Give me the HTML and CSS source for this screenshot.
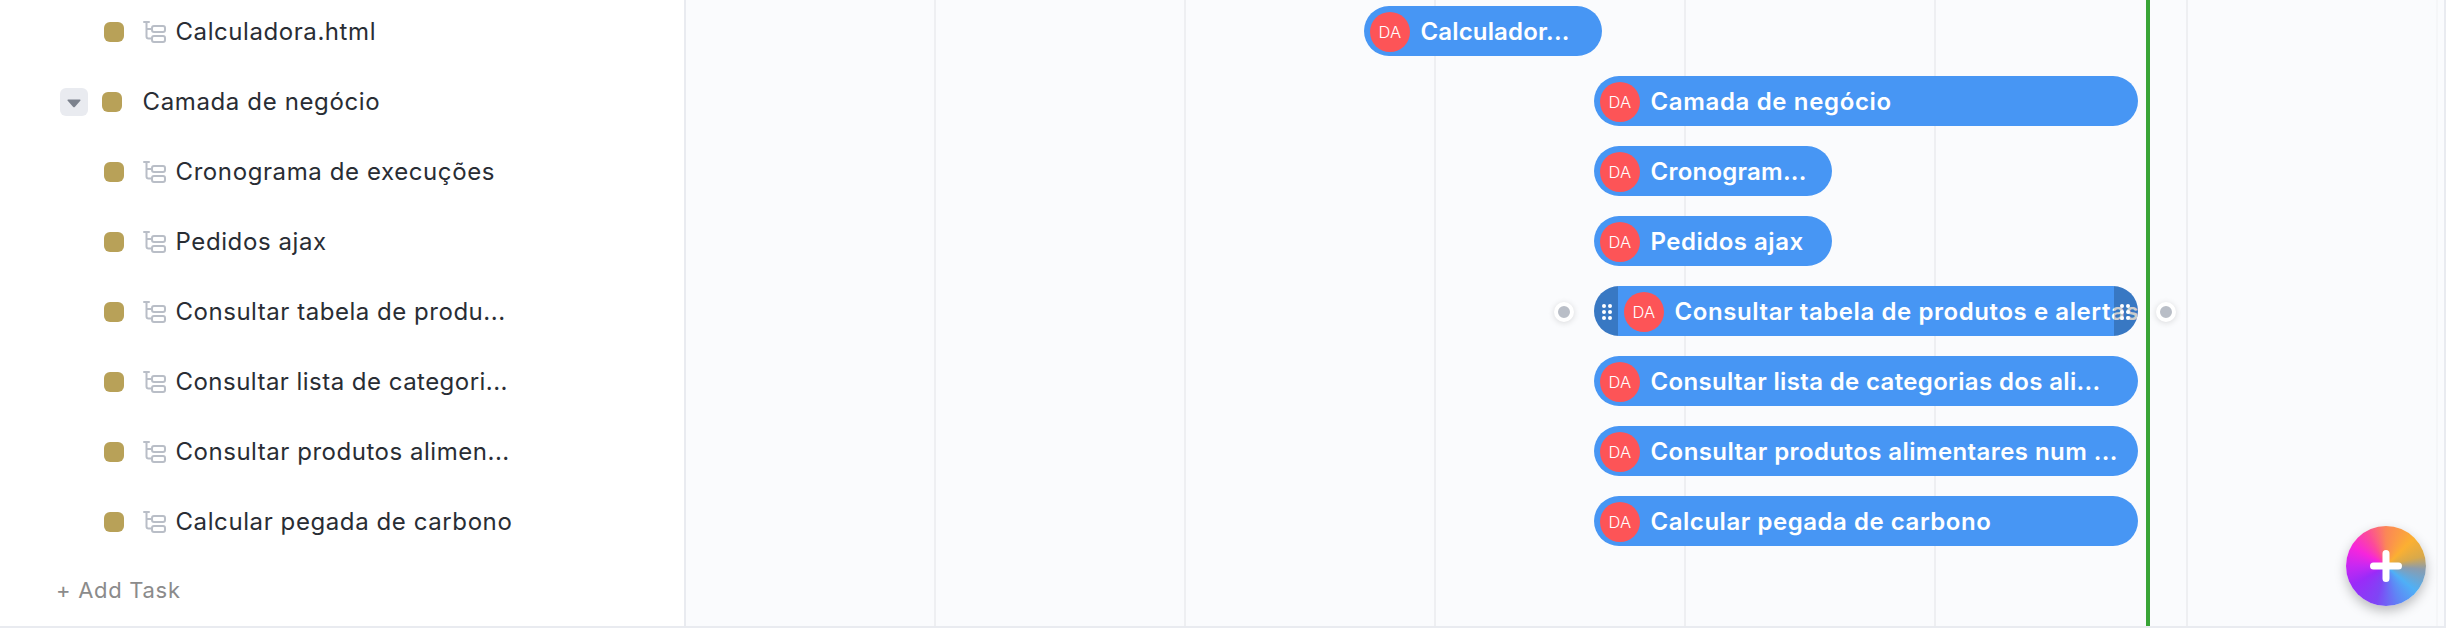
FILE: index.html
```html
<!DOCTYPE html>
<html lang="pt">
<head>
<meta charset="utf-8">
<title>Gantt</title>
<link rel="stylesheet" href="styles.css">
</head>
<body>
<svg class="defs" width="0" height="0" aria-hidden="true">
  <symbol id="subtask" viewBox="0 0 24 24">
    <path d="M1 2h5M3.5 2v14.5q0 2 2 2H9M3.5 9H9"/>
    <rect x="9" y="6" width="13" height="6" rx="2"/>
    <rect x="9" y="16" width="13" height="6" rx="2"/>
  </symbol>
  <symbol id="grip" viewBox="0 0 10 16">
    <circle cx="2" cy="2" r="2"/><circle cx="8" cy="2" r="2"/>
    <circle cx="2" cy="8" r="2"/><circle cx="8" cy="8" r="2"/>
    <circle cx="2" cy="14" r="2"/><circle cx="8" cy="14" r="2"/>
  </symbol>
</svg>
<div class="gantt">
  <aside class="tasks">
    <div class="row sub"><i class="status"></i><svg class="tree"><use href="#subtask"/></svg><span class="name n1">Calculadora.html</span></div>
    <div class="row parent"><button class="toggle"><svg width="14" height="9" viewBox="0 0 14 9"><path d="M1 .5h12q1 .3.3 1.2L8 7.8q-1 1-2 0L.7 1.7Q0 .8 1 .5z"/></svg></button><i class="status"></i><span class="name n2">Camada de negócio</span></div>
    <div class="row sub"><i class="status"></i><svg class="tree"><use href="#subtask"/></svg><span class="name n3">Cronograma de execuções</span></div>
    <div class="row sub"><i class="status"></i><svg class="tree"><use href="#subtask"/></svg><span class="name n4">Pedidos ajax</span></div>
    <div class="row sub"><i class="status"></i><svg class="tree"><use href="#subtask"/></svg><span class="name n5">Consultar tabela de produ...</span></div>
    <div class="row sub"><i class="status"></i><svg class="tree"><use href="#subtask"/></svg><span class="name n6">Consultar lista de categori...</span></div>
    <div class="row sub"><i class="status"></i><svg class="tree"><use href="#subtask"/></svg><span class="name n7">Consultar produtos alimen...</span></div>
    <div class="row sub"><i class="status"></i><svg class="tree"><use href="#subtask"/></svg><span class="name n8">Calcular pegada de carbono</span></div>
    <div class="add">+ Add Task</div>
  </aside>
  <main class="timeline">
    <div class="columns"><i></i><i></i><i></i><i></i><i></i><i class="wide"></i><i class="last"></i></div>
    <div class="today"></div>
    <div class="bars">
      <div class="lane first"><div class="bar short"><b class="avatar">DA</b><span class="label l1">Calculador...</span></div></div>
      <div class="lane"><div class="bar"><b class="avatar">DA</b><span class="label l2">Camada de negócio</span></div></div>
      <div class="lane"><div class="bar short"><b class="avatar">DA</b><span class="label l3">Cronogram...</span></div></div>
      <div class="lane"><div class="bar short"><b class="avatar">DA</b><span class="label l4">Pedidos ajax</span></div></div>
      <div class="lane linked"><i class="link"></i><div class="bar active"><b class="avatar">DA</b><span class="label l5">Consultar tabela de produtos e alertas</span><span class="handle start"><svg><use href="#grip"/></svg></span><span class="handle end"><svg><use href="#grip"/></svg></span></div><i class="link"></i></div>
      <div class="lane"><div class="bar"><b class="avatar">DA</b><span class="label l6">Consultar lista de categorias dos ali...</span></div></div>
      <div class="lane"><div class="bar"><b class="avatar">DA</b><span class="label l7">Consultar produtos alimentares num ...</span></div></div>
      <div class="lane"><div class="bar"><b class="avatar">DA</b><span class="label l8">Calcular pegada de carbono</span></div></div>
    </div>
  </main>
  <div class="edge"></div>
  <button class="fab"><svg width="32" height="32" viewBox="0 0 32 32"><path d="M16 3.5v25M3.5 16h25"/></svg></button>
</div>
</body>
</html>
```

FILE: styles.css
```css
* { box-sizing: border-box; }
body { margin: 0; font-family: Inter, "Noto Sans", sans-serif; background: #fff; overflow: hidden; }
.defs { position: absolute; }
button { border: 0; padding: 0; }

.gantt { position: relative; display: flex; width: 2446px; height: 628px; overflow: hidden; border-bottom: 2px solid #e9ebf0; }
.tasks { width: 686px; flex: none; border-right: 2px solid #e9ebf0; background: #fff; }
.row { display: flex; align-items: center; height: 70px; }
.row:first-child { margin-top: -4px; }
.sub { padding-left: 104px; }
.parent { padding-left: 60px; }
.status { width: 20px; height: 20px; margin-top: 2px; border-radius: 6px; background: #b8a158; }
.tree { width: 24px; height: 24px; margin: 1px 8.5px 0 19px; fill: none; stroke: #b9bec7; stroke-width: 2; stroke-linecap: round; }
.toggle { display: flex; align-items: center; justify-content: center; width: 28px; height: 28px; margin: 2px 14px 0 0; padding-top: 3px; border-radius: 6px; background: #e9ebf0; }
.toggle svg { fill: #7c828d; }
.name { padding-top: 2px; color: #292d34; font-size: 24px; font-weight: 400; line-height: 30px; white-space: nowrap; }
.parent .name { margin-left: 20.5px; }
.add { padding: 19px 0 0 56px; color: #8b8b8b; font-size: 22px; font-weight: 400; line-height: 30px; letter-spacing: .7px; white-space: nowrap; }
.n1 { letter-spacing: .57px; }
.n2 { letter-spacing: .63px; }
.n3 { letter-spacing: .6px; }
.n4 { letter-spacing: .6px; }
.n5 { letter-spacing: .53px; }
.n6 { letter-spacing: .47px; }
.n7 { letter-spacing: .53px; }
.n8 { letter-spacing: .59px; }

.timeline { position: relative; width: 1758px; flex: none; background: #fafbfd; }
.columns { display: flex; height: 100%; }
.columns i { width: 250px; flex: none; border-right: 2px solid #eeeff2; }
.columns .wide { width: 252px; }
.columns .last { border-color: #f5f6f8; }
.today { position: absolute; top: 0; left: 1460px; width: 4px; height: 100%; background: #38a436; }
.bars { position: absolute; top: -4px; left: 0; right: 0; }
.lane { display: flex; align-items: center; height: 70px; padding-left: 908px; }
.lane.first { padding-left: 678px; }
.lane.linked { padding-left: 868px; }
.bar { position: relative; display: flex; align-items: center; width: 544px; height: 50px; flex: none; padding-left: 6px; border-radius: 25px; background: #4796f4; overflow: hidden; }
.bar.short { width: 238px; }
.bar.active { margin: 0 18px 0 20px; padding-left: 30px; }
.avatar { display: flex; align-items: center; justify-content: center; width: 40px; height: 40px; flex: none; margin: 2px 10.5px 0 0; border-radius: 50%; background: #fd5457; color: #fff; font-size: 16.5px; font-weight: 300; letter-spacing: .3px; }
.label { padding-top: 2px; color: #fff; font-size: 24px; font-weight: 600; line-height: 30px; white-space: nowrap; }
.l1 { letter-spacing: .15px; }
.l2 { letter-spacing: .65px; }
.l3 { letter-spacing: .24px; }
.l4 { letter-spacing: .5px; }
.l5 { letter-spacing: .58px; }
.l6 { letter-spacing: .35px; }
.l7 { letter-spacing: .42px; }
.l8 { letter-spacing: .54px; }
.handle { position: absolute; top: 0; width: 24px; height: 50px; padding: 18px 0 0 8px; background: rgba(0, 0, 0, .2); }
.handle svg { display: block; width: 10px; height: 16px; fill: #fff; }
.start { left: 0; }
.end { right: 0; padding-left: 6px; }
.link { width: 20px; height: 20px; flex: none; margin-top: 2px; border: 4px solid #fff; border-radius: 50%; background: #b9bec7; box-shadow: 0 1px 6px rgba(0, 0, 0, .14); }

.edge { width: 2px; background: #e9ebf0; }
.fab { position: absolute; left: 2346px; top: 526px; display: flex; align-items: center; justify-content: center; width: 80px; height: 80px; border-radius: 50%; background: conic-gradient(from 0deg, #fb8757, #fbb032 45deg, #d9a94a 75deg, #8a9cae 95deg, #4fb0f6 130deg, #5f86f5 160deg, #7f45f5 195deg, #9a2bf8 240deg, #c728f2 270deg, #f625dc 300deg, #fc4a9a 330deg, #fb8757); box-shadow: 0 5px 12px rgba(0, 0, 0, .25); }
.fab path { fill: none; stroke: #fff; stroke-width: 7; stroke-linecap: round; }
```
